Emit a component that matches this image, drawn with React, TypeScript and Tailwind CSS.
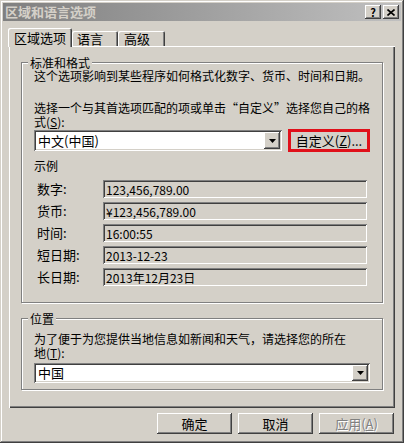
import React from 'react'

const font = { fontFamily: '"SimSun", "Noto Sans CJK SC", "Noto Sans", sans-serif' }

const raised =
  'shadow-[inset_-1px_-1px_#404040,inset_1px_1px_#ffffff,inset_-2px_-2px_#808080,inset_2px_2px_#d4d0c8]'
const sunken =
  'shadow-[inset_1px_1px_#808080,inset_-1px_-1px_#ffffff,inset_2px_2px_#404040,inset_-2px_-2px_#d4d0c8]'

function DropArrow() {
  return (
    <div className={`flex h-full w-[16px] items-center justify-center bg-[#d4d0c8] ${raised}`}>
      <svg width="7" height="4" viewBox="0 0 7 4">
        <path d="M0 0h7L3.5 4z" fill="#000" />
      </svg>
    </div>
  )
}

function Combo({ value, className }: { value: string; className: string }) {
  return (
    <div className={`flex items-stretch bg-white p-[2px] ${sunken} ${className}`}>
      <div className="flex flex-1 items-center pl-[2px] text-[13px] leading-[14px] text-black">{value}</div>
      <DropArrow />
    </div>
  )
}

function Group({ label, children }: { label: string; children: React.ReactNode }) {
  return (
    <fieldset className="border border-[#808080] shadow-[inset_1px_1px_#ffffff,1px_1px_#ffffff]">
      <legend className="ml-[6px] bg-[#d4d0c8] px-[2px] text-[12px] leading-[13px]">{label}</legend>
      <div className="px-[12px]">{children}</div>
    </fieldset>
  )
}

function Button({ label, disabled }: { label: React.ReactNode; disabled?: boolean }) {
  return (
    <div
      className={`flex h-[21px] w-[75px] items-center justify-center bg-[#d4d0c8] text-[13px] leading-[14px] ${raised} ${
        disabled ? 'text-[#808080] [text-shadow:1px_1px_#ffffff]' : 'text-black'
      }`}
    >
      {label}
    </div>
  )
}

export default function App() {
  const samples = [
    { label: '数字:', value: '123,456,789.00' },
    { label: '货币:', value: '¥123,456,789.00' },
    { label: '时间:', value: '16:00:55' },
    { label: '短日期:', value: '2013-12-23' },
    { label: '长日期:', value: '2013年12月23日' },
  ]

  return (
    <div
      style={font}
      className="relative h-[443px] w-[404px] overflow-hidden bg-[#d4d0c8] p-[3px] text-[12px] text-black shadow-[inset_-1px_-1px_#404040,inset_1px_1px_#d4d0c8,inset_-2px_-2px_#808080,inset_2px_2px_#ffffff]"
    >
      {/* title bar */}
      <div className="flex h-[18px] items-center justify-between bg-gradient-to-r from-[#808080] to-[#c0c0c0] pl-[2px] pr-[2px]">
        <span className="text-[13px] font-bold leading-[14px] text-[#d4d0c8]">区域和语言选项</span>
        <div className="flex gap-[2px]">
          <div className={`flex h-[14px] w-[16px] items-center justify-center bg-[#d4d0c8] text-[11px] font-bold leading-none ${raised}`}>
            ?
          </div>
          <div className={`flex h-[14px] w-[16px] items-center justify-center bg-[#d4d0c8] ${raised}`}>
            <svg width="8" height="7" viewBox="0 0 8 7">
              <path d="M0.5 0.5L7.5 6.5M7.5 0.5L0.5 6.5" stroke="#000" strokeWidth="1.6" />
            </svg>
          </div>
        </div>
      </div>

      {/* tabs */}
      <div className="mt-[7px] flex h-[18px] items-end pl-[5px]">
        <div className="relative z-10 -mb-[1px] flex h-[19px] w-[64px] items-center justify-center rounded-t-[2px] bg-[#d4d0c8] pt-[1px] text-[13px] leading-[14px] shadow-[inset_1px_1px_#ffffff,inset_-1px_0_#404040,inset_-2px_0_#808080]">
          区域选项
        </div>
        <div className="flex h-[15px] w-[46px] items-center rounded-t-[2px] pl-[5px] text-[13px] leading-[14px] shadow-[inset_1px_1px_#ffffff,inset_-1px_0_#404040,inset_-2px_0_#808080]">
          语言
        </div>
        <div className="flex h-[15px] w-[47px] items-center rounded-t-[2px] pl-[6px] text-[13px] leading-[14px] shadow-[inset_1px_1px_#ffffff,inset_-1px_0_#404040,inset_-2px_0_#808080]">
          高级
        </div>
      </div>

      {/* panel */}
      <div className="mx-[6px] h-[362px] px-[12px] pt-[10px] shadow-[inset_1px_1px_#ffffff,inset_-1px_-1px_#404040,inset_-2px_-2px_#808080]">
        <Group label="标准和格式">
          <div className="leading-[14px]">这个选项影响到某些程序如何格式化数字、货币、时间和日期。</div>
          <div className="mt-[18px] leading-[14px]">
            <div>选择一个与其首选项匹配的项或单击“自定义”选择您自己的格</div>
            <div>
              式(<u>S</u>):
            </div>
          </div>
          <div className="flex items-center gap-[6px]">
            <Combo value="中文(中国)" className="h-[21px] w-[248px]" />
            <div className="flex h-[23px] w-[82px] items-center justify-center border-[3px] border-[#e0101a] bg-[#d4d0c8] text-[13px] leading-[14px]">
              自定义(<u>Z</u>)...
            </div>
          </div>
          <div className="mt-[7px] leading-[14px]">示例</div>
          <div className="mt-[7px] flex flex-col gap-[4px] pb-[16px]">
            {samples.map((s) => (
              <div key={s.label} className="flex items-center">
                <div className="w-[69px] pl-[3px] text-[13px] leading-[14px]">{s.label}</div>
                <div className={`flex h-[18px] w-[264px] items-center bg-[#d4d0c8] pl-[3px] text-[12px] leading-[13px] ${sunken}`}>
                  {s.value}
                </div>
              </div>
            ))}
          </div>
        </Group>

        <div className="mt-[9px]">
          <Group label="位置">
            <div className="pt-[7px] leading-[14px]">
              <div>为了便于为您提供当地信息如新闻和天气，请选择您的所在</div>
              <div>
                地(<u>T</u>):
              </div>
            </div>
            <Combo value="中国" className="mb-[6px] mt-[3px] h-[20px] w-[336px]" />
          </Group>
        </div>
      </div>

      {/* bottom buttons */}
      <div className="mt-[5px] flex justify-end gap-[6px] pr-[7px]">
        <Button label="确定" />
        <Button label="取消" />
        <Button label={<>应用(<u>A</u>)</>} disabled />
      </div>
    </div>
  )
}
